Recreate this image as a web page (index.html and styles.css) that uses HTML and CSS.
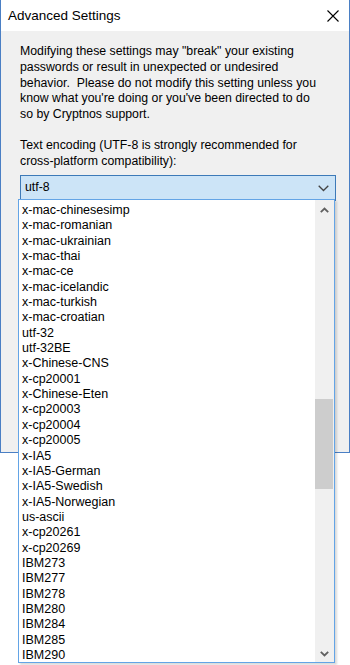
FILE: index.html
```html
<!DOCTYPE html>
<html lang="en">
<head>
  <meta charset="UTF-8" />
  <meta name="viewport" content="width=device-width, initial-scale=1.0"/>
  <title>Advanced Settings</title>
  <link rel="stylesheet" href="styles.css">
</head>
<body>
  <div class="window">
    <div class="titlebar">
      <span class="title">Advanced Settings</span>
      <svg class="close" width="12" height="12" viewBox="0 0 12 12">
        <path d="M0.5 0.5 L11.5 11.5 M11.5 0.5 L0.5 11.5" stroke="#000" stroke-width="1.1" fill="none"/>
      </svg>
    </div>

    <div class="content">
      <p class="warning">
        Modifying these settings may "break" your existing<br>
        passwords or result in unexpected or undesired<br>
        behavior.&nbsp; Please do not modify this setting unless you<br>
        know what you're doing or you've been directed to do<br>
        so by Cryptnos support.
      </p>

      <p class="label">
        Text encoding (UTF-8 is strongly recommended for<br>
        cross-platform compatibility):
      </p>

      <div class="combo">
        <span>utf-8</span>
        <svg width="11" height="7" viewBox="0 0 11 7">
          <path d="M0.7 0.7 L5.5 5.5 L10.3 0.7" stroke="#444" stroke-width="1.3" fill="none"/>
        </svg>
      </div>
    </div>
  </div>

  <div class="dropdown">
    <ul class="options">
      <li>x-mac-chinesesimp</li>
      <li>x-mac-romanian</li>
      <li>x-mac-ukrainian</li>
      <li>x-mac-thai</li>
      <li>x-mac-ce</li>
      <li>x-mac-icelandic</li>
      <li>x-mac-turkish</li>
      <li>x-mac-croatian</li>
      <li>utf-32</li>
      <li>utf-32BE</li>
      <li>x-Chinese-CNS</li>
      <li>x-cp20001</li>
      <li>x-Chinese-Eten</li>
      <li>x-cp20003</li>
      <li>x-cp20004</li>
      <li>x-cp20005</li>
      <li>x-IA5</li>
      <li>x-IA5-German</li>
      <li>x-IA5-Swedish</li>
      <li>x-IA5-Norwegian</li>
      <li>us-ascii</li>
      <li>x-cp20261</li>
      <li>x-cp20269</li>
      <li>IBM273</li>
      <li>IBM277</li>
      <li>IBM278</li>
      <li>IBM280</li>
      <li>IBM284</li>
      <li>IBM285</li>
      <li>IBM290</li>
    </ul>
    <div class="scrollbar">
      <svg width="9" height="6" viewBox="0 0 9 6">
        <path d="M0.8 5.2 L4.5 1.5 L8.2 5.2" stroke="#606060" stroke-width="1.8" fill="none"/>
      </svg>
      <div class="track">
        <div class="thumb"></div>
      </div>
      <svg width="9" height="6" viewBox="0 0 9 6">
        <path d="M0.8 0.8 L4.5 4.5 L8.2 0.8" stroke="#606060" stroke-width="1.8" fill="none"/>
      </svg>
    </div>
  </div>
</body>
</html>
```

FILE: styles.css
```css
*,
*::before,
*::after {
  margin: 0;
  padding: 0;
  box-sizing: border-box;
}

body {
  background: #fff;
  font-family: "Liberation Sans", Arial, sans-serif;
  color: #000;
  position: relative;
  height: 665px;
  overflow: hidden;
}

.window {
  width: 350px;
  height: 453px;
  border: 1px solid #4a7fc4;
  border-top: none;
  background: #f0f0f0;
}

.titlebar {
  height: 31px;
  background: #fff;
  display: flex;
  align-items: center;
  justify-content: space-between;
  padding: 0 10px 0 7px;
}

.title {
  font-size: 13.5px;
  padding-bottom: 1px;
}

.content {
  padding: 13px 15px 0 19px;
  font-size: 12.3px;
  line-height: 15.8px;
}

.warning {
  margin-bottom: 15px;
}

.label {
  margin-bottom: 5px;
}

.combo {
  height: 26px;
  width: 316px;
  background: #cce4f7;
  border: 1px solid #3d7ab8;
  display: flex;
  align-items: center;
  justify-content: space-between;
  padding: 0 6px 0 4px;
}

.combo svg {
  margin-top: 1px;
}

.dropdown {
  position: absolute;
  left: 18px;
  top: 199px;
  width: 317px;
  height: 464px;
  background: #fff;
  border: 1px solid #63a4e6;
  display: flex;
  box-shadow: 2px 2px 2px rgba(0, 0, 0, 0.15);
}

.options {
  list-style: none;
  flex: 1;
  padding: 3px 0 0 3px;
  font-size: 12.5px;
  line-height: 15.35px;
}

.scrollbar {
  width: 19px;
  background: #f0f0f0;
  display: flex;
  flex-direction: column;
  align-items: center;
  padding: 7px 0 5px;
}

.track {
  flex: 1;
  width: 100%;
  padding: 186px 1px 0 0;
}

.thumb {
  height: 90px;
  background: #cdcdcd;
}
```
